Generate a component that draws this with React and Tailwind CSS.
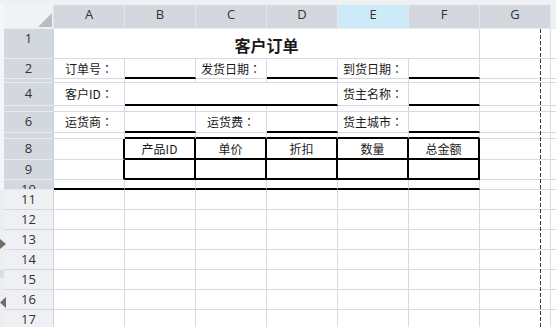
import React from "react";

// Spreadsheet view: 客户订单 form laid out on a grid (rows 1-17 visible).
const COLS = ["A", "B", "C", "D", "E", "F", "G", "H"];

const blank = (n) => Array.from({ length: n }, () => ({}));

const ROWS = [
  { n: "1", h: "h-[30px]", dark: true, top: true, cells: [{ w: "w-[426px]", t: "客户订单", title: true }, {}, {}] },
  {
    n: "2",
    h: "h-[20px]",
    dark: true,
    cells: [{ t: "订单号：" }, { u: 1 }, { t: "发货日期：" }, { u: 1 }, { t: "到货日期：" }, { u: 1 }, {}, {}],
  },
  { n: "3", h: "h-[4px]", dark: true, top: true, cells: blank(8) },
  {
    n: "4",
    h: "h-[23px]",
    dark: true,
    cells: [{ t: "客户ID：" }, { w: "w-[213px]", u: 1 }, { t: "货主名称：" }, { u: 1 }, {}, {}],
  },
  { n: "5", h: "h-[6px]", dark: true, top: true, cells: blank(8) },
  {
    n: "6",
    h: "h-[21px]",
    dark: true,
    cells: [{ t: "运货商：" }, { u: 1 }, { t: "运货费：" }, { u: 1 }, { t: "货主城市：" }, { u: 1 }, {}, {}],
  },
  { n: "7", h: "h-[6px]", dark: true, top: true, cells: [{}, { u: 1 }, { u: 1 }, { u: 1 }, { u: 1 }, { u: 1 }, {}, {}] },
  {
    n: "8",
    h: "h-[21px]",
    dark: true,
    cells: [
      { r: 1 },
      { t: "产品ID", r: 1, u: 1 },
      { t: "单价", r: 1, u: 1 },
      { t: "折扣", r: 1, u: 1 },
      { t: "数量", r: 1, u: 1 },
      { t: "总金额", r: 1, u: 1 },
      {},
      {},
    ],
  },
  {
    n: "9",
    h: "h-[20px]",
    dark: true,
    cells: [{ r: 1 }, { r: 1, u: 1 }, { r: 1, u: 1 }, { r: 1, u: 1 }, { r: 1, u: 1 }, { r: 1, u: 1 }, {}, {}],
  },
  { n: "10", h: "h-[10px]", dark: true, top: true, cells: [{ u: 1 }, { u: 1 }, { u: 1 }, { u: 1 }, { u: 1 }, { u: 1 }, {}, {}] },
  ...["11", "12", "13", "14", "15", "16", "17", "18"].map((n) => ({ n, h: "h-[20px]", cells: blank(8) })),
];

// full-width colon drawn centred, as the sheet's font does
function Label({ t }) {
  if (!t || !t.endsWith("：")) return t || null;
  return (
    <>
      {t.slice(0, -1)}
      <span className="font-['Noto_Sans_CJK_TC',sans-serif]">：</span>
    </>
  );
}

function Cell({ c }) {
  const cls = [
    c.w || "w-[71px]",
    "shrink-0 flex items-center justify-center overflow-hidden whitespace-nowrap text-[#1a1a1a]",
    c.u ? "border-b-2 border-b-black" : "border-b border-b-[#d5dae4]",
    c.r ? "border-r-2 border-r-black" : "border-r border-r-[#d5dae4]",
    c.title ? "text-[16px] font-bold pt-[2px]" : "text-[12px]",
  ].join(" ");
  return (
    <div className={cls}>
      <Label t={c.t} />
    </div>
  );
}

function Row({ row }) {
  const head = row.dark
    ? "bg-[#d3d7de] border-b-[#e6e9ee]"
    : "bg-[#eef0f4] border-b-[#d3d8e1]";
  return (
    <div className={`flex ${row.h}`}>
      <div
        className={`w-[50px] shrink-0 overflow-hidden border-b border-r border-r-[#cdd2da] text-[13px] text-[#333] font-['Open_Sans',sans-serif] ${head} ${
          row.top ? "" : "flex items-center justify-center"
        }`}
      >
        {row.top ? <div className="h-[20px] shrink-0 flex items-center justify-center">{row.n}</div> : row.n}
      </div>
      {row.cells.map((c, i) => (
        <Cell key={i} c={c} />
      ))}
    </div>
  );
}

export default function App() {
  return (
    <div className="relative w-[556px] h-[327px] overflow-hidden bg-white font-['Noto_Sans_CJK_SC',sans-serif]">
      <div className="h-[5px] bg-[#eef0f3]" />
      <div className="flex">
        <div className="w-[4px] shrink-0 flex flex-col">
          <div className="h-[185px] bg-[#f5f6f8]" />
          <div className="h-[80px] bg-[#eceef1]" />
          <div className="h-[8px] bg-[#d9dce1]" />
          <div className="h-[60px] bg-[#eceef1]" />
        </div>
        <div className="flex flex-col">
          {/* column headers */}
          <div className="flex h-[24px] font-['Open_Sans',sans-serif] text-[13px] text-[#333]">
            <div className="w-[50px] shrink-0 bg-[#f0f2f5] border-b border-b-[#e8ebf0] border-r border-r-[#e4e7eb] flex items-end justify-end pr-[1px] pb-[1px]">
              <svg width="14" height="14" viewBox="0 0 14 14">
                <polygon points="14,0 14,14 0,14" fill="#b9bdc3" />
              </svg>
            </div>
            {COLS.map((col) => (
              <div
                key={col}
                className={`w-[71px] shrink-0 flex items-center justify-center pb-[3px] border-b border-b-[#e8ebf0] border-r border-r-[#e4e7eb] ${
                  col === "E" ? "bg-[#cdeaf8]" : col === "H" ? "bg-[#eef0f3]" : "bg-[#d3d7de]"
                }`}
              >
                {col === "H" ? "" : col}
              </div>
            ))}
          </div>
          {ROWS.map((row) => (
            <Row key={row.n} row={row} />
          ))}
        </div>
      </div>

      {/* page break line */}
      <div className="absolute left-[540px] top-[29px] bottom-0 w-px bg-[repeating-linear-gradient(to_bottom,#3a3a3a_0_4px,transparent_4px_6px)]" />

      {/* row group markers */}
      <svg className="absolute left-0 top-[239px]" width="6" height="10" viewBox="0 0 6 10">
        <polygon points="0,0 6,5 0,10" fill="#746c64" />
      </svg>
      <svg className="absolute left-0 top-[297px]" width="6" height="11" viewBox="0 0 6 11">
        <polygon points="6,0 0,5.5 6,11" fill="#746c64" />
      </svg>
    </div>
  );
}
